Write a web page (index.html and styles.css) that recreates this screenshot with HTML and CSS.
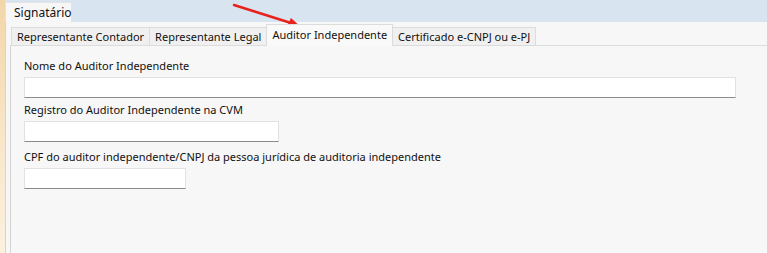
FILE: index.html
```html
<!DOCTYPE html>
<html lang="pt-BR">
<head>
    <meta charset="UTF-8">
    <title>Signatário</title>
    <link rel="stylesheet" href="styles.css">
</head>
<body>
    <div class="edge"></div>
    <div class="window">
        <div class="outer-tabs">
            <div class="outer-tab">Signatário</div>
        </div>
        <div class="outer-panel">
            <div class="inner-tabs">
                <div class="tab">Representante Contador</div>
                <div class="tab">Representante Legal</div>
                <div class="tab active">Auditor Independente</div>
                <div class="tab">Certificado e-CNPJ ou e-PJ</div>
            </div>
            <div class="inner-panel">
                <label class="field-label">Nome do Auditor Independente</label>
                <input class="field field-long" type="text">

                <label class="field-label">Registro do Auditor Independente na CVM</label>
                <input class="field field-mid" type="text">

                <label class="field-label">CPF do auditor independente/CNPJ da pessoa jurídica de auditoria independente</label>
                <input class="field field-short" type="text">
            </div>
        </div>
    </div>

    <!-- annotation arrow -->
    <svg class="arrow" width="80" height="32" viewBox="0 0 80 32">
        <line x1="3" y1="4" x2="60" y2="22" stroke="#e8231c" stroke-width="2.5" stroke-linecap="round"/>
        <polygon points="71,27 55,27 60,17" fill="#e8231c"/>
    </svg>
</body>
</html>
```

FILE: styles.css
```css
* {
    margin: 0;
    padding: 0;
    box-sizing: border-box;
}

body {
    width: 767px;
    height: 253px;
    overflow: hidden;
    display: flex;
    font-family: "Noto Sans", "Open Sans", sans-serif;
    font-size: 11px;
    color: #111;
    background-color: #f7f7f7;
    position: relative;
}

.edge {
    width: 5px;
    flex-shrink: 0;
    background: linear-gradient(to bottom, #f2d6a8, #f9e8cc 60%, #fcf1df);
}

.window {
    flex: 1;
    display: flex;
    flex-direction: column;
}

.outer-tabs {
    height: 22px;
    background-color: #d8e4f0;
    display: flex;
    align-items: flex-end;
}

.outer-tab {
    width: 67px;
    height: 20px;
    padding-left: 8px;
    line-height: 19px;
    font-size: 12px;
    background-color: #f7f7f7;
    border: 1px solid #e3e3e3;
    border-bottom: none;
}

.outer-panel {
    flex: 1;
    display: flex;
    flex-direction: column;
    padding-left: 4px;
    border-left: 1px solid #d4d4d4;
    background-color: #f7f7f7;
}

.inner-tabs {
    height: 23px;
    display: flex;
    align-items: flex-end;
    padding-left: 1px;
}

.tab {
    height: 18px;
    padding: 0 5px;
    line-height: 17px;
    background-color: #f0f0f0;
    border: 1px solid #dcdcdc;
    border-bottom: none;
    margin-right: -1px;
    white-space: nowrap;
}

.tab.active {
    height: 22px;
    line-height: 19px;
    padding-bottom: 2px;
    background-color: #f9f9f9;
    position: relative;
    z-index: 1;
    margin-bottom: -1px;
}

.inner-panel {
    flex: 1;
    display: flex;
    flex-direction: column;
    align-items: flex-start;
    padding: 13px 0 0 13px;
    border-top: 1px solid #dcdcdc;
    border-left: 1px solid #d4d4d4;
    background-color: #f7f7f7;
}

.field-label {
    line-height: 14px;
    margin-bottom: 4px;
    white-space: nowrap;
}

.field {
    height: 21px;
    background-color: #ffffff;
    border: 1px solid #e2e2e2;
    border-bottom: 1px solid #8a8a8a;
    margin-bottom: 5px;
    font: inherit;
    outline: none;
}

.field-long {
    width: 712px;
}

.field-mid {
    width: 255px;
    margin-bottom: 8px;
}

.field-short {
    width: 162px;
}

.arrow {
    position: absolute;
    left: 231px;
    top: 1px;
}
```
